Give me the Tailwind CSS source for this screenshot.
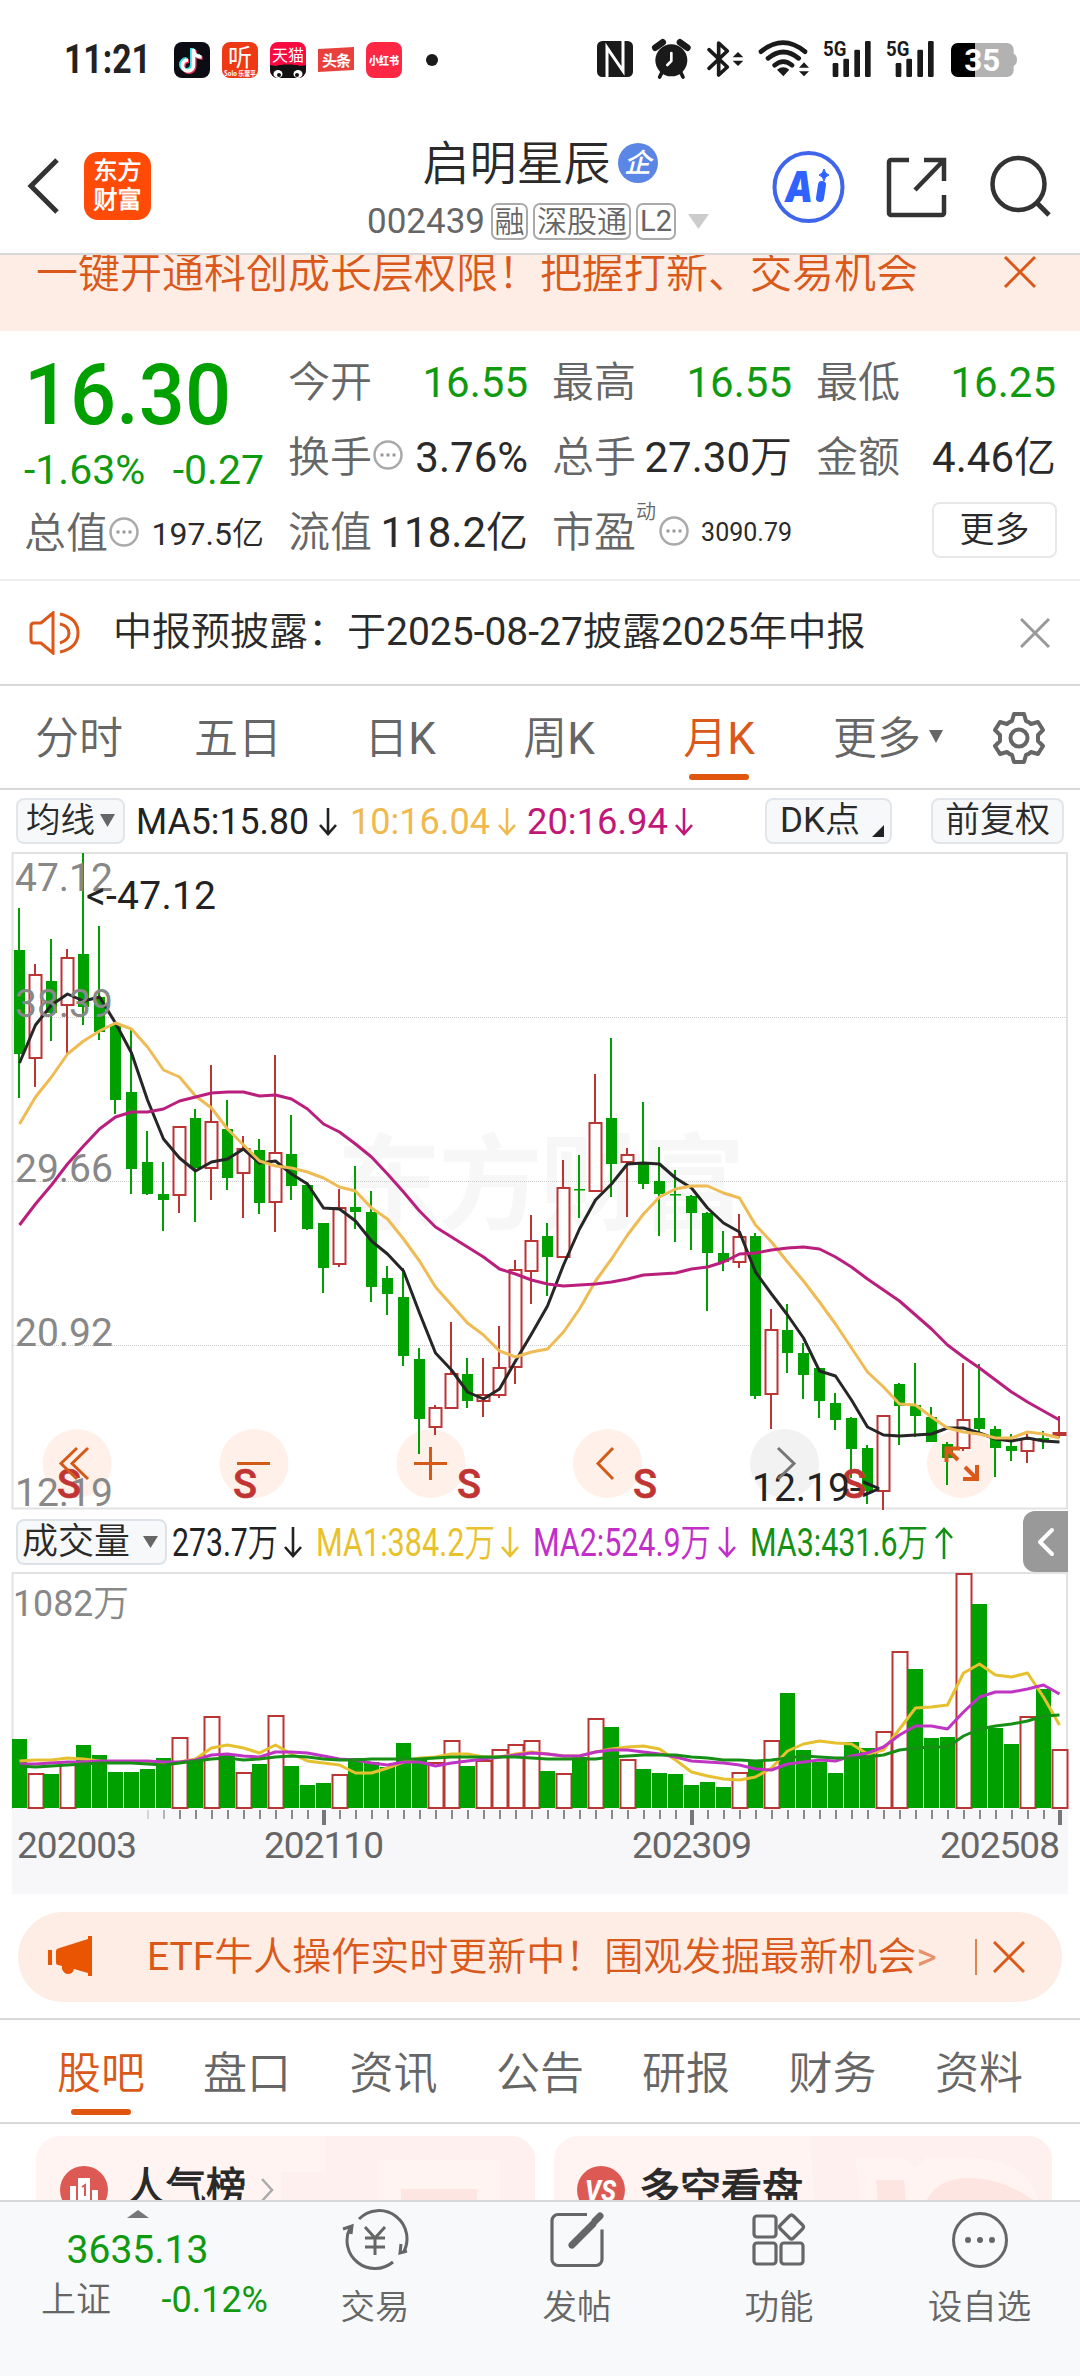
<!DOCTYPE html>
<html lang="zh-CN">
<head>
<meta charset="utf-8">
<title>启明星辰 002439</title>
<script src="https://cdn.jsdelivr.net/npm/@tailwindcss/browser@4"></script>
</head>
<body class="bg-white">
<div class="w-[1080px] h-[2376px] overflow-hidden flex flex-col bg-white text-[#2a2a2a] leading-none whitespace-nowrap font-['Roboto','Noto_Sans_CJK_SC_DemiLight','Noto_Sans_CJK_SC',sans-serif]">

  <!-- status bar -->
  <header class="h-[120px] shrink-0 flex items-start justify-between pt-[25px] pl-[60px] pr-[40px]">
    <svg class="w-[400px] h-[70px]" viewBox="60 25 400 70">
      <text x="64" y="73" font-size="40" font-weight="700" fill="#222" textLength="87" lengthAdjust="spacingAndGlyphs" font-family="Roboto">11:21</text>
      <rect x="174" y="42" width="36" height="36" rx="8" fill="#0b0c14"/>
      <g fill="none" stroke-width="4"><path d="M193.500 49v16.500a5.500 5.500 0 1 1-5.500-5.500M193.500 49c0 5 3.500 8 8 8" stroke="#3be0e6" transform="translate(-1.500 -1)"/><path d="M193.500 49v16.500a5.500 5.500 0 1 1-5.500-5.500M193.500 49c0 5 3.500 8 8 8" stroke="#f5365c" transform="translate(1 1)"/><path d="M193.500 49v16.500a5.500 5.500 0 1 1-5.500-5.500M193.500 49c0 5 3.500 8 8 8" stroke="#fff" stroke-width="3.500"/></g>
      <rect x="222" y="42" width="36" height="36" rx="8" fill="#ee3a14"/>
      <g fill="#fff" font-family="'Noto Sans CJK SC',sans-serif"><text x="228" y="66" font-size="24">听</text><text x="224" y="76" font-size="7" font-weight="700" textLength="32" lengthAdjust="spacingAndGlyphs">Solo 乐聚平</text></g>
      <rect x="270" y="42" width="36" height="36" rx="8" fill="#fa0a40"/>
      <path d="M270 70v-5l6 1c4-2 20-2 24 0l6-1v5a8 8 0 0 1-8 8h-20a8 8 0 0 1-8-8z" fill="#111"/>
      <ellipse cx="278" cy="74" rx="4.500" ry="4" fill="#fff"/><ellipse cx="298" cy="74" rx="4.500" ry="4" fill="#fff"/><circle cx="279" cy="75" r="2" fill="#111"/><circle cx="297" cy="75" r="2" fill="#111"/>
      <text x="272" y="61" font-size="16" fill="#fff" font-family="'Noto Sans CJK SC',sans-serif">天猫</text>
      <path d="M318 49l36-2v23l-36 2z" fill="#e8413d"/>
      <text x="322" y="66" font-size="15" font-weight="700" fill="#fff" textLength="29" font-family="'Noto Sans CJK SC',sans-serif">头条</text>
      <rect x="366" y="42" width="36" height="36" rx="8" fill="#ff2844"/>
      <text x="369" y="64.500" font-size="11" font-weight="800" fill="#fff" textLength="30" lengthAdjust="spacingAndGlyphs" font-family="'Noto Sans CJK SC',sans-serif">小红书</text>
      <circle cx="432" cy="60" r="6" fill="#1a1a1a"/>
    </svg>
    <svg class="w-[460px] h-[70px]" viewBox="0 0 1380 210" fill="#1a1a1a">
      <rect x="51" y="48" width="108" height="108" rx="16"/>
      <path d="M81 156V68l48 70V48" fill="none" stroke="#fff" stroke-width="9"/>
      <circle cx="274" cy="106" r="48"/><path d="M226 68l22-16M322 68l-22-16" stroke="#1a1a1a" stroke-width="20" stroke-linecap="round"/><path d="M247 140l-8 16M301 140l8 16" stroke="#1a1a1a" stroke-width="11" stroke-linecap="round"/><path d="M274 84v24l-12 12" stroke="#fff" stroke-width="8" fill="none" stroke-linecap="round" stroke-linejoin="round"/>
      <path d="M387 74l55 52-26 24V54l26 24-55 52" fill="none" stroke="#1a1a1a" stroke-width="11" stroke-linejoin="round" stroke-linecap="round"/>
      <path d="M458 97l16-16 16 16zM458 107l16 16 16-16z"/>
      <path d="M543 80q66-54 132 0M564 100q46-38 92 0M584 121q26-22 52 0" fill="none" stroke="#1a1a1a" stroke-width="14" stroke-linecap="round"/>
      <path d="M591 134q19-14 37 0l-18 20z"/><path d="M657 128l15-16 15 16zM657 139l15 15 15-15z"/>
      <g id="sig"><text x="729" y="92" font-size="62" font-weight="700" textLength="70" lengthAdjust="spacingAndGlyphs" font-family="Roboto">5G</text>
      <rect x="758" y="114" width="17" height="42" rx="4"/><rect x="790" y="101" width="17" height="55" rx="4"/><rect x="823" y="74" width="17" height="82" rx="4"/><rect x="855" y="48" width="17" height="108" rx="4"/></g>
      <use href="#sig" x="189"/>
      <path d="M1141 54h140a20 20 0 0 1 20 20v12q10 4 10 18t-10 18v14a20 20 0 0 1-20 20h-140z" fill="#b2b2b2"/>
      <path d="M1185 54v102h-52a20 20 0 0 1-20-20V74a20 20 0 0 1 20-20z" fill="#000"/>
      <text x="1153" y="138" font-size="92" font-weight="700" fill="#fff" textLength="108" lengthAdjust="spacingAndGlyphs" font-family="Roboto">35</text>
    </svg>
  </header>

  <!-- title bar -->
  <div class="h-[135px] shrink-0 border-b-2 border-[#d8d8d8] flex items-start">
    <div class="w-[340px] flex items-center pl-[26px] gap-[24px] pt-[32px]">
      <svg class="w-[34px] h-[60px]" viewBox="0 0 34 60"><path d="M31 4L5 30l26 26" fill="none" stroke="#333" stroke-width="5"/></svg>
      <div class="w-[67px] h-[68px] rounded-[14px] bg-[#ff4a08] text-white font-bold text-[24px] leading-[29px] flex flex-col items-center justify-center"><span>东方</span><span>财富</span></div>
    </div>
    <div class="w-[400px] flex flex-col items-center pt-[18px]">
      <div class="flex items-center h-[50px] text-[47px]">启明星辰<span class="ml-[7px] w-[40px] h-[40px] rounded-full bg-[#5b86e5] text-white text-[26px] font-bold italic flex items-center justify-center">企</span></div>
      <div class="flex items-center h-[37px] mt-[15px] text-[35px] text-[#666] pr-[4px]">002439
        <span class="ml-[6px] w-[37px] h-[37px] rounded-[7px] border-2 border-[#aaa] text-[30px] flex items-center justify-center">融</span>
        <span class="ml-[5px] w-[98px] h-[37px] rounded-[7px] border-2 border-[#aaa] text-[30px] flex items-center justify-center">深股通</span>
        <span class="ml-[5px] w-[40px] h-[37px] rounded-[7px] border-2 border-[#aaa] text-[29px] flex items-center justify-center">L2</span>
        <svg class="ml-[12px] w-[21px] h-[15px]" viewBox="0 0 21 15"><path d="M0 0h21L10.500 15z" fill="#ccc"/></svg>
      </div>
    </div>
    <svg class="ml-[30px] w-[310px] h-[80px] mt-[28px]" viewBox="770 148 310 80" fill="none">
      <circle cx="808.500" cy="187" r="34" stroke="#3f66ea" stroke-width="4"/>
      <text x="785" y="202" font-size="43" font-weight="900" font-style="italic" fill="#2f62ff" textLength="28" lengthAdjust="spacingAndGlyphs" font-family="Inter">A</text>
      <path d="M822 185l-2 13" stroke="#2f62ff" stroke-width="8" stroke-linecap="round"/><path d="M824 169q1 5 5 6-4 1-5 6-1-5-5-6 4-1 5-6z" fill="#2f62ff" stroke="#2f62ff"/>
      <path d="M909 160h-18a2 2 0 0 0-2 2v51a2 2 0 0 0 2 2h51a2 2 0 0 0 2-2v-18M924 160h20v21M943 161l-28 29" stroke="#333" stroke-width="4.500"/>
      <circle cx="1018.500" cy="184" r="26" stroke="#333" stroke-width="4.500"/><path d="M1037 203l12 12" stroke="#333" stroke-width="5"/>
    </svg>
  </div>

  <!-- promotion strip -->
  <div class="h-[76px] shrink-0 bg-[#fdede4] overflow-hidden flex justify-between items-start pl-[36px] pr-[43px] text-[#d9581a]">
    <span class="text-[42px] leading-[42px] -mt-[2px]">一键开通科创成长层权限！把握打新、交易机会</span>
    <svg class="w-[34px] h-[34px]" viewBox="0 0 34 34"><path d="M2 2l30 30M32 2L2 32" stroke="#d9581a" stroke-width="3"/></svg>
  </div>

  <!-- quote figures -->
  <section class="h-[250px] shrink-0 border-b-2 border-[#eee] px-[24px] flex gap-[24px] text-[42px] text-[#2a2a2a]">
    <div class="w-[240px] flex flex-col">
      <svg class="w-[240px] h-[105px]" viewBox="24 331 240 105"><text x="24" y="424" font-size="85" font-weight="500" fill="#00a000" textLength="207" lengthAdjust="spacingAndGlyphs" font-family="Roboto">16.30</text></svg>
      <div class="h-[68px] flex items-center justify-between text-[41px] text-[#109a10]"><span>-1.63%</span><span>-0.27</span></div>
      <div class="h-[60px] flex items-center justify-between"><span class="flex items-center text-[#666]">总值<svg class="w-[32px] h-[32px] -mt-[4px]" viewBox="0 0 32 32"><use href="#tip"/></svg></span><span class="text-[32px]">197.5亿</span></div>
    </div>
    <div class="w-[240px] pt-[14px] flex flex-col">
      <div class="h-[75px] flex items-center justify-between"><span class="text-[#666]">今开</span><span class="text-[#109a10]">16.55</span></div>
      <div class="h-[75px] flex items-center justify-between"><span class="flex items-center text-[#666]">换手<svg class="w-[32px] h-[32px] -mt-[6px]" viewBox="0 0 32 32"><g id="tip"><circle cx="16" cy="16" r="13.500" fill="none" stroke="#aaa" stroke-width="2.500"/><path d="M8.500 16h3M14.500 16h3M20.500 16h3" stroke="#999" stroke-width="3"/></g></svg></span><span>3.76%</span></div>
      <div class="h-[75px] flex items-center justify-between"><span class="text-[#666]">流值</span><span>118.2亿</span></div>
    </div>
    <div class="w-[240px] pt-[14px] flex flex-col">
      <div class="h-[75px] flex items-center justify-between"><span class="text-[#666]">最高</span><span class="text-[#109a10]">16.55</span></div>
      <div class="h-[75px] flex items-center justify-between"><span class="text-[#666]">总手</span><span>27.30万</span></div>
      <div class="h-[75px] flex items-center justify-between"><span class="flex items-center text-[#666]">市盈<span class="text-[20px] self-start -mt-[10px]">动</span><svg class="ml-[2px] w-[32px] h-[32px] -mt-[4px]" viewBox="0 0 32 32"><use href="#tip"/></svg></span><span class="text-[25px]">3090.79</span></div>
    </div>
    <div class="w-[240px] pt-[14px] flex flex-col">
      <div class="h-[75px] flex items-center justify-between"><span class="text-[#666]">最低</span><span class="text-[#109a10]">16.25</span></div>
      <div class="h-[75px] flex items-center justify-between"><span class="text-[#666]">金额</span><span>4.46亿</span></div>
      <div class="h-[70px] flex items-center justify-end"><span class="-mr-px w-[125px] h-[56px] rounded-[8px] border-2 border-[#e8e8e8] text-[35px] flex items-center justify-center">更多</span></div>
    </div>
  </section>

  <!-- notice -->
  <div class="h-[105px] shrink-0 border-b-2 border-[#d8d8d8] flex items-center pl-[28px] pr-[30px]">
    <svg class="w-[54px] h-[44px]" viewBox="28 611 54 44" fill="none" stroke="#d9581a" stroke-width="3"><path d="M53 613L41 623h-7q-3 0-3 3v14q0 3 3 3h7l12 10z"/><path d="M60 614q18 4 18 19t-18 19M60 624q9 2 9 9t-9 10"/></svg>
    <span class="ml-[31px] text-[39px]">中报预披露：于2025-08-27披露2025年中报</span>
    <svg class="ml-auto w-[30px] h-[30px]" viewBox="0 0 30 30"><path d="M1 1l28 28M29 1L1 29" stroke="#999" stroke-width="3"/></svg>
  </div>

  <!-- period tabs -->
  <nav class="h-[104px] shrink-0 border-b-2 border-[#d8d8d8] flex items-center pt-[4px] text-[44px] text-[#666]">
    <div class="w-[158px] text-center">分时</div>
    <div class="w-[160px] text-center">五日</div>
    <div class="w-[164px] text-center">日K</div>
    <div class="w-[154px] text-center">周K</div>
    <div class="w-[166px] relative flex flex-col items-center text-[#d9581a]">月K<span class="absolute top-[57px] w-[60px] h-[6px] rounded-full bg-[#e0560f]"></span></div>
    <div class="w-[176px] flex items-center pl-[31px] gap-[8px]">更多<svg class="w-[14px] h-[13px] -mt-[6px]" viewBox="0 0 14 13"><path d="M0 0h14L7 13z" fill="#666"/></svg></div>
    <svg class="ml-[14px] w-[54px] h-[54px] -mt-[3px]" viewBox="-27 -27 54 54" fill="none" stroke="#666" stroke-width="4" stroke-linejoin="round"><path d="M-5-24H5L7-17Q10-16 12-14L19-16 24-8 19-3V3L24 8 19 16 12 14Q10 16 7 17L5 24H-5L-7 17Q-10 16-12 14L-19 16-24 8-19 3V-3L-24-8-19-16-12-14Q-10-16-7-17Z"/><circle r="8.500"/></svg>
  </nav>

  <!-- moving averages -->
  <div class="h-[61px] shrink-0 flex items-center pl-[16px] pr-[16px] text-[36px]">
    <div class="w-[109px] h-[46px] rounded-[8px] border-2 border-[#e2e6ea] bg-[#f6f8fa] flex items-center pl-[8px] gap-[5px] text-[34.500px]">均线<svg class="w-[15px] h-[13px]" viewBox="0 0 15 13"><path d="M0 0h15L7.500 13z" fill="#666"/></svg></div>
    <svg class="ml-[9px] w-[600px] h-[50px]" viewBox="134 796 600 50" font-family="Roboto" font-size="37.500" fill="none" stroke-width="2.600">
      <text x="136" y="834" fill="#222" textLength="173" lengthAdjust="spacingAndGlyphs">MA5:15.80</text><path d="M328 808v26M320 825l8 9 8-9" stroke="#222"/>
      <text x="350" y="834" fill="#f0b94e" textLength="140" lengthAdjust="spacingAndGlyphs">10:16.04</text><path d="M507 808v26M499 825l8 9 8-9" stroke="#f0b94e"/>
      <text x="527" y="834" fill="#c01878" textLength="141" lengthAdjust="spacingAndGlyphs">20:16.94</text><path d="M684 808v26M676 825l8 9 8-9" stroke="#c01878"/>
    </svg>
    <div class="ml-auto w-[127px] h-[46px] rounded-[8px] border-2 border-[#e2e6ea] bg-[#f6f8fa] flex items-center pl-[13px] gap-[12px] text-[35px]">DK点<svg class="w-[12px] h-[12px] mt-[20px]" viewBox="0 0 12 12"><path d="M12 0v12H0z" fill="#222"/></svg></div>
    <div class="ml-[39px] w-[133px] h-[46px] rounded-[8px] border-2 border-[#e2e6ea] bg-[#f6f8fa] flex items-center justify-center text-[35px]">前复权</div>
  </div>

  <!-- candlestick chart -->
  <svg class="w-[1080px] h-[660px] shrink-0" viewBox="0 851 1080 660" font-family="Roboto">
    <text x="337" y="1222" font-size="104" font-weight="700" fill="#f7f7f7" textLength="408" font-family="'Noto Sans CJK SC',sans-serif">东方财富</text>
    <path d="M12.500 853v656M1067 853v656M12 853h1056M12 1508.500h1056" stroke="#e2e2e2" stroke-width="2"/>
    <path d="M12 1017.500h1056M12 1181.500h1056M12 1345.500h1056" stroke="#ccc" stroke-dasharray="1 1"/>
    <g>
      <circle cx="77" cy="1463.500" r="34.500" fill="#fff0e9"/><circle cx="254" cy="1463.500" r="34.500" fill="#fff0e9"/><circle cx="431" cy="1463.500" r="34.500" fill="#fff0e9"/><circle cx="607.500" cy="1463.500" r="34.500" fill="#fff0e9"/><circle cx="784.500" cy="1463.500" r="34.500" fill="#f2f2f2"/><circle cx="961.500" cy="1463.500" r="34.500" fill="#fff0e9"/>
    </g>
    <g id="candles"></g>
    <g id="averages" fill="none" stroke-width="3" stroke-linejoin="round"></g>
    <g font-size="39" fill="#888"><text x="15" y="891">47.12</text><text x="15" y="1017">38.39</text><text x="15" y="1182">29.66</text><text x="15" y="1346">20.92</text><text x="15" y="1506">12.19</text></g>
    <g font-size="40" font-weight="500" fill="#c03434" stroke="#c03434" stroke-width=".6"><text x="57" y="1498" textLength="24" lengthAdjust="spacingAndGlyphs">S</text><text x="233" y="1498" textLength="24" lengthAdjust="spacingAndGlyphs">S</text><text x="457" y="1498" textLength="24" lengthAdjust="spacingAndGlyphs">S</text><text x="633" y="1498" textLength="24" lengthAdjust="spacingAndGlyphs">S</text><text x="842" y="1498" textLength="24" lengthAdjust="spacingAndGlyphs">S</text></g>
    <g font-size="39" fill="#222"><text x="86" y="909" textLength="130">&lt;-47.12</text><text x="752" y="1501" textLength="129">12.19-&gt;</text></g>
    <g fill="none" stroke="#d45a18" stroke-width="3"><path d="M77 1448l-16 15.500 16 15.500M88 1448l-16 15.500 16 15.500M237 1463.500h33M414 1463.500h33M430.500 1447v33M613 1448l-15 15.500 15 15.500"/><path d="M778 1448l16 15.500-16 15.500" stroke="#777"/><path d="M960 1448.500h-13.500v13.500M947 1449l11 11M963 1479h14v-14M976 1478l-11-11" stroke-width="4" stroke="#d9581a"/></g>
  </svg>

  <!-- volume legend -->
  <div class="h-[61px] shrink-0 flex items-center pl-[16px] pr-[12px]">
    <div class="w-[151px] h-[46px] rounded-[8px] border-2 border-[#dde2e8] bg-[#f6f8fa] flex items-center justify-between pl-[4px] pr-[7px] text-[36px]">成交量<svg class="w-[15px] h-[12px]" viewBox="0 0 15 12"><path d="M0 0h15L7.500 12z" fill="#666"/></svg></div>
    <svg class="w-[840px] h-[56px]" viewBox="167 1513 840 56" font-family="Roboto,'Noto Sans CJK SC DemiLight','Noto Sans CJK SC',sans-serif" font-size="38" fill="none" stroke-width="2.600">
      <text x="172" y="1555" fill="#222" textLength="106" lengthAdjust="spacingAndGlyphs">273.7万</text><path d="M293 1526v29M285 1546l8 9 8-9" stroke="#222"/>
      <text x="316" y="1555" fill="#e8c22c" textLength="179" lengthAdjust="spacingAndGlyphs">MA1:384.2万</text><path d="M510 1526v29M502 1546l8 9 8-9" stroke="#e8c22c"/>
      <text x="533" y="1555" fill="#c22ec8" textLength="178" lengthAdjust="spacingAndGlyphs">MA2:524.9万</text><path d="M727 1526v29M719 1546l8 9 8-9" stroke="#c22ec8"/>
      <text x="750" y="1555" fill="#149014" textLength="178" lengthAdjust="spacingAndGlyphs">MA3:431.6万</text><path d="M944 1558v-30M936 1537l8-9 8 9" stroke="#149014"/>
    </svg>
    <div class="ml-auto w-[45px] h-[61px] rounded-l-[12px] bg-[#999] flex items-center justify-center"><svg class="w-[18px] h-[30px]" viewBox="0 0 18 30"><path d="M15 3L3 15l12 12" fill="none" stroke="#fff" stroke-width="4" stroke-linecap="round" stroke-linejoin="round"/></svg></div>
  </div>

  <!-- volume chart -->
  <svg class="w-[1080px] h-[322px] shrink-0" viewBox="0 1572 1080 322" font-family="Roboto,'Noto Sans CJK SC DemiLight','Noto Sans CJK SC',sans-serif">
    <rect x="12" y="1809" width="1056" height="85" fill="#f7f7fa"/>
    <path d="M12 1573h1056M12.500 1573v236M1067 1573v236" stroke="#e2e2e2" stroke-width="2" fill="none"/>
    <g id="volumes"></g>
    <g id="volavg" fill="none" stroke-width="3" stroke-linejoin="round"></g>
    <g id="ticks" stroke="#888" stroke-width="2"></g>
    <text x="13" y="1616" font-size="36" fill="#888" textLength="116" lengthAdjust="spacingAndGlyphs">1082万</text>
    <g font-size="37" fill="#666"><text x="17" y="1858" textLength="120">202003</text><text x="264" y="1858" textLength="120">202110</text><text x="632" y="1858" textLength="120">202309</text><text x="940" y="1858" textLength="120">202508</text></g>
  </svg>

  <!-- ETF promotion -->
  <div class="mt-[18px] mx-[18px] h-[90px] shrink-0 rounded-full bg-[#fdede4] flex items-center text-[#d9581a] pl-[29px] pr-[37px]">
    <svg class="w-[48px] h-[42px]" viewBox="0 0 48 42" fill="#ea5504"><path d="M1 14h4v15H1zM9 15q0-2 2-2.500L41 3V0h4v40h-4v-3l-14-4q-1 5-6 5-4 0-6-5v-3l-4-1q-2 0-2-3z"/></svg>
    <span class="ml-[52px] text-[39px]">ETF牛人操作实时更新中！围观发掘最新机会<span class="opacity-60">&gt;</span></span>
    <span class="ml-auto w-[2px] h-[36px] bg-[#e0844f]"></span>
    <svg class="ml-[16px] w-[32px] h-[32px]" viewBox="0 0 32 32"><path d="M1 1l30 30M31 1L1 31" stroke="#d9581a" stroke-width="3"/></svg>
  </div>

  <!-- section tabs -->
  <nav class="mt-[16px] h-[106px] shrink-0 border-y-2 border-[#d8d8d8] flex items-center pt-[5px] pl-[28px] text-[44px] text-[#666]">
    <div class="w-[146px] relative flex flex-col items-center text-[#d9581a]">股吧<span class="absolute top-[57px] w-[60px] h-[6px] rounded-full bg-[#e0560f]"></span></div>
    <div class="w-[146px] text-center">盘口</div>
    <div class="w-[147px] text-center">资讯</div>
    <div class="w-[146px] text-center">公告</div>
    <div class="w-[146px] text-center">研报</div>
    <div class="w-[147px] text-center">财务</div>
    <div class="w-[146px] text-center">资料</div>
  </nav>

  <!-- cards -->
  <div class="h-[76px] shrink-0 overflow-hidden pt-[12px] px-[36px] flex gap-[19px]">
    <div class="relative w-[499px] h-[160px] shrink-0 rounded-[24px] overflow-hidden bg-[#fff4f2] pl-[24px] pt-[30px] flex items-start">
      <svg class="absolute left-0 top-0 w-[499px] h-[66px]" viewBox="0 0 499 66"><path d="M245 66V36h44V0h210v66z" fill="#fef0ee"/><path d="M342 66V24h122v42z" fill="#fff4f2"/><path d="M365 66V53h76v13z" fill="#fde5e2"/></svg>
      <svg class="relative w-[48px] h-[48px]" viewBox="0 0 48 48"><circle cx="24" cy="24" r="24" fill="#dd5a54"/><path d="M10 20h6v20h-6zM18 12h12v28H18zM32 24h6v16h-6z" fill="#fff"/><path d="M22 21l3-2v11" fill="none" stroke="#dd5a54" stroke-width="2"/></svg>
      <span class="relative ml-[18px] mt-[2px] text-[40px] font-bold">人气榜</span>
      <svg class="relative ml-[14px] mt-[12px] w-[15px] h-[24px]" viewBox="0 0 15 24"><path d="M2 1l10 11L2 23" fill="none" stroke="#aaa" stroke-width="2.500"/></svg>
    </div>
    <div class="relative w-[498px] h-[160px] shrink-0 rounded-[24px] overflow-hidden bg-[#fff4f2] pl-[23px] pt-[30px] flex items-start">
      <svg class="absolute left-0 top-0 w-[498px] h-[66px]" viewBox="0 0 498 66"><path d="M256 0h242v66H260z" fill="#fef0ee"/><path d="M301 22h50l10 10 12-10h40q60 0 72 44H309z" fill="#fff4f2"/><path d="M322 44h28l2 22h-28zM372 66q10-24 44-24t66 24z" fill="#fde5e2"/></svg>
      <svg class="relative w-[48px] h-[48px]" viewBox="0 0 48 48"><circle cx="24" cy="24" r="24" fill="#dd5a54"/><text x="8" y="35" font-size="29" font-weight="800" font-style="italic" fill="#fff" textLength="31" lengthAdjust="spacingAndGlyphs" font-family="Roboto">VS</text></svg>
      <span class="relative ml-[14px] mt-[3px] text-[41px] font-bold">多空看盘</span>
    </div>
  </div>

  <!-- bottom bar -->
  <footer class="h-[176px] shrink-0 border-t-2 border-[#d8d8d8] bg-[#f7f9fb] flex text-[35px] text-[#666]">
    <div class="w-[275px] flex flex-col items-center pt-[8px]">
      <svg class="w-[22px] h-[8px]" viewBox="0 0 22 8"><path d="M0 8h22L11 0z" fill="#777"/></svg>
      <span class="mt-[13px] text-[39px] text-[#109a10]">3635.13</span>
      <div class="mt-[12px] self-stretch flex justify-between items-center pl-[41px] pr-[7px]"><span>上证</span><span class="text-[36px] text-[#109a10]">-0.12%</span></div>
    </div>
    <div class="w-[200px] flex flex-col items-center pt-[7px] gap-[19px]">
      <svg class="w-[68px] h-[62px]" viewBox="341 2209 68 62" fill="none" stroke="#666" stroke-width="3"><path d="M359 2219a28 28 0 0 1 44 34M393 2262a28 28 0 0 1-43-34M343 2229l9-3-1 8M407 2251l-7 2 1-9M365 2227l10 11 10-11M375 2238v17M365 2238h20M365 2247h20"/></svg><span class="text-[34.500px]">交易</span></div>
    <div class="w-[204px] flex flex-col items-center pt-[7px] gap-[19px]">
      <svg class="w-[62px] h-[62px]" viewBox="546 2209 62 62" fill="none" stroke="#666" stroke-width="3.200"><path d="M587 2214.500h-29a6 6 0 0 0-6 6v39a6 6 0 0 0 6 6h38a6 6 0 0 0 6-6v-30"/><path d="M595 2221l5-5M572 2245l21-21" stroke-width="7" stroke-linecap="round"/><path d="M574 2240l-5 8 9-4z" fill="#666" stroke="none"/></svg><span class="text-[34.500px]">发帖</span></div>
    <div class="w-[200px] flex flex-col items-center pt-[7px] gap-[19px]">
      <svg class="w-[62px] h-[62px]" viewBox="748 2209 62 62" fill="none" stroke="#666" stroke-width="3.200" stroke-linejoin="round"><rect x="754" y="2216" width="22" height="21" rx="3"/><rect x="754" y="2243" width="22" height="21" rx="3"/><rect x="781" y="2243" width="22" height="21" rx="3"/><path d="M789.500 2216q2-2 4 0l9 9q2 2 0 4l-9 9q-2 2-4 0l-9-9q-2-2 0-4z"/></svg><span class="text-[34.500px]">功能</span></div>
    <div class="w-[201px] flex flex-col items-center pt-[7px] gap-[19px]">
      <svg class="w-[62px] h-[62px]" viewBox="0 0 62 62"><circle cx="31" cy="31" r="26.500" fill="none" stroke="#666" stroke-width="3"/><g fill="#666"><circle cx="19" cy="31" r="3"/><circle cx="31" cy="31" r="3"/><circle cx="43" cy="31" r="3"/></g></svg><span class="text-[34.500px]">设自选</span></div>
  </footer>
</div>

<script>
// one candle per month: direction, high, body top, body bottom, low
const candles = `G908,950,1054,1098 R964,974,1059,1087 G939,981,1013,1041 R949,957,1006,1054 G853,954,1007,1025 G926,997,1032,1040 G1023,1025,1100,1114 G1030,1092,1169,1194 G1131,1162,1194,1195 G1162,1194,1200,1231 R1126,1126,1196,1213
G1109,1118,1168,1222 R1065,1121,1169,1200 G1100,1129,1178,1190 R1136,1148,1174,1218 G1139,1150,1203,1214 R1055,1152,1203,1232 G1115,1154,1186,1200 G1182,1185,1229,1230 G1223,1223,1268,1293 R1189,1207,1265,1267 G1166,1207,1212,1229
G1191,1212,1287,1302 G1266,1278,1294,1315 G1268,1297,1356,1366 G1348,1359,1419,1454 R1405,1407,1428,1435 R1322,1373,1409,1409 G1358,1374,1401,1408 R1358,1394,1402,1417 R1326,1367,1396,1398 R1260,1269,1368,1384 R1215,1240,1272,1304
G1223,1236,1257,1296 R1160,1187,1258,1258 G1155,1189,1190,1218 R1074,1122,1192,1192 G1038,1118,1164,1197 R1148,1154,1163,1217 G1102,1163,1184,1189 G1147,1181,1194,1236 G1170,1194,1195,1242 G1195,1196,1213,1250 G1212,1213,1253,1311
G1231,1253,1262,1271 R1214,1236,1263,1268 G1233,1236,1396,1399 R1309,1329,1395,1429 G1304,1330,1353,1373 G1343,1353,1375,1399 G1368,1368,1401,1418 G1393,1403,1420,1430 G1417,1418,1449,1478 G1445,1448,1491,1504 R1415,1415,1492,1510
G1383,1384,1406,1445 G1363,1405,1416,1437 G1407,1417,1442,1442 G1442,1444,1458,1485 R1363,1419,1449,1451 G1364,1418,1429,1433 G1426,1429,1448,1477 G1434,1446,1451,1461 R1434,1438,1452,1463 G1431,1438,1440,1449 R1416,1432,1436,1438`.split(/\s+/);
const volumes = [1739,1773,1774,1761,1745,1755,1772,1772,1769,1758,1737,1760,1716,1755,1772,1764,1715,1766,1785,1783,1774,1758,1762,1767,1743,1760,1762,1740,1766,1760,1749,1744,1740,1771,1773,1757,1718,1727,1759,1769,1773,1774,1785,1782,1787,1772,1762,1740,1693,1750,1762,1773,1742,1748,1731,1651,1669,1738,1737,1573,1604,1728,1744,1716,1689,1749];
const ma5 = [1063,1025,1005,994,1001,997,1023,1053,1100,1139,1158,1171,1162,1159,1149,1163,1161,1174,1184,1208,1209,1221,1241,1254,1271,1313,1353,1370,1392,1399,1389,1361,1334,1306,1265,1229,1200,1184,1164,1163,1164,1178,1188,1208,1223,1232,1272,1294,1315,1338,1371,1376,1400,1427,1435,1436,1435,1434,1428,1428,1433,1439,1441,1438,1441,1442];
const ma10 = [1124,1097,1077,1054,1041,1031,1023,1029,1047,1070,1077,1096,1108,1129,1145,1161,1166,1168,1172,1178,1187,1191,1208,1219,1239,1261,1287,1305,1323,1335,1351,1357,1352,1349,1332,1309,1281,1259,1235,1214,1197,1189,1186,1186,1193,1198,1225,1242,1262,1281,1302,1324,1348,1372,1387,1404,1405,1417,1428,1432,1434,1438,1438,1432,1434,1438];
const ma20 = [1225,1204,1185,1164,1146,1129,1117,1112,1112,1109,1101,1097,1093,1092,1092,1096,1095,1099,1109,1124,1132,1144,1157,1174,1192,1211,1227,1237,1247,1257,1269,1274,1280,1284,1286,1285,1284,1282,1279,1275,1274,1273,1269,1267,1262,1254,1253,1250,1248,1247,1249,1257,1267,1279,1290,1301,1315,1329,1345,1357,1368,1380,1392,1402,1411,1420];
const v1 = [1761,1760,1760,1758,1759,1761,1762,1762,1762,1764,1762,1759,1748,1745,1748,1753,1745,1754,1761,1763,1765,1773,1773,1768,1762,1758,1757,1754,1754,1757,1757,1754,1752,1754,1756,1756,1752,1749,1747,1746,1749,1760,1772,1776,1779,1780,1777,1768,1751,1744,1741,1743,1744,1744,1754,1750,1729,1708,1707,1705,1673,1664,1675,1677,1673,1697,1725];
const v2 = [1764,1764,1763,1762,1762,1761,1761,1761,1761,1762,1762,1760,1755,1754,1756,1757,1752,1752,1753,1756,1759,1760,1763,1765,1762,1762,1766,1763,1761,1759,1757,1755,1753,1754,1756,1756,1752,1750,1750,1752,1754,1757,1761,1762,1763,1765,1769,1770,1764,1762,1760,1761,1756,1753,1747,1735,1726,1726,1729,1712,1697,1692,1692,1689,1685,1694];
const v3 = [1766,1767,1766,1765,1764,1763,1763,1763,1764,1765,1763,1761,1759,1758,1760,1759,1757,1756,1757,1759,1760,1760,1759,1759,1759,1759,1758,1757,1757,1757,1757,1757,1758,1759,1759,1759,1759,1757,1756,1755,1755,1755,1757,1758,1760,1760,1761,1760,1758,1756,1757,1758,1758,1757,1755,1750,1748,1747,1747,1736,1729,1726,1724,1721,1716,1715];
v1.splice(53, 1);
const G = '#00a000', R = '#bb3535';
let c = '', v = '', t = '';
candles.forEach((s, i) => {
  const up = s[0] === 'R', [h, a, b, l] = s.slice(1).split(',').map(Number), x = 19 + 16 * i;
  const bh = Math.max(b - a, 1.5);
  c += up
    ? `<path d="M${x} ${h}V${a}M${x} ${b}V${l}" stroke="${R}" stroke-width="2"/><rect x="${x - 5.5}" y="${a + 1}" width="12" height="${Math.max(bh - 2, 1)}" fill="${bh < 5 ? R : '#fff'}" stroke="${R}" stroke-width="2"/>`
    : `<path d="M${x} ${h}V${l}" stroke="${G}" stroke-width="2"/><rect x="${x - 5}" y="${a}" width="11" height="${bh}" fill="${G}"/>`;
  const y = volumes[i];
  v += up || i === 55
    ? `<rect x="${x - 6.5}" y="${y + 1}" width="15" height="${1807 - y}" fill="#fff" stroke="${R}" stroke-width="2"/>`
    : `<rect x="${x - 7}" y="${y}" width="15" height="${1808 - y}" fill="${G}"/>`;
  if (i >= 8) {
    const big = i === 19 || i === 42 || i === 65;
    t += `<path d="M${x + 1} 1810v${big ? 15 : 9}" ${big ? 'stroke="#777" stroke-width="4"' : ''} opacity="${i === 8 ? .3 : i === 9 ? .6 : 1}"/>`;
  }
});
const line = (d, col) => `<polyline stroke="${col}" points="${d.map((y, i) => `${19.5 + 16 * i},${y}`).join(' ')}"/>`;
document.getElementById('candles').innerHTML = c;
document.getElementById('averages').innerHTML = line(ma5, '#262626') + line(ma10, '#eebb55') + line(ma20, '#ba1f7d');
document.getElementById('volumes').innerHTML = v;
document.getElementById('volavg').innerHTML = line(v1, '#e6c02e') + line(v2, '#c034c4') + line(v3, '#159015');
document.getElementById('ticks').innerHTML = t;
</script>
</body>
</html>
